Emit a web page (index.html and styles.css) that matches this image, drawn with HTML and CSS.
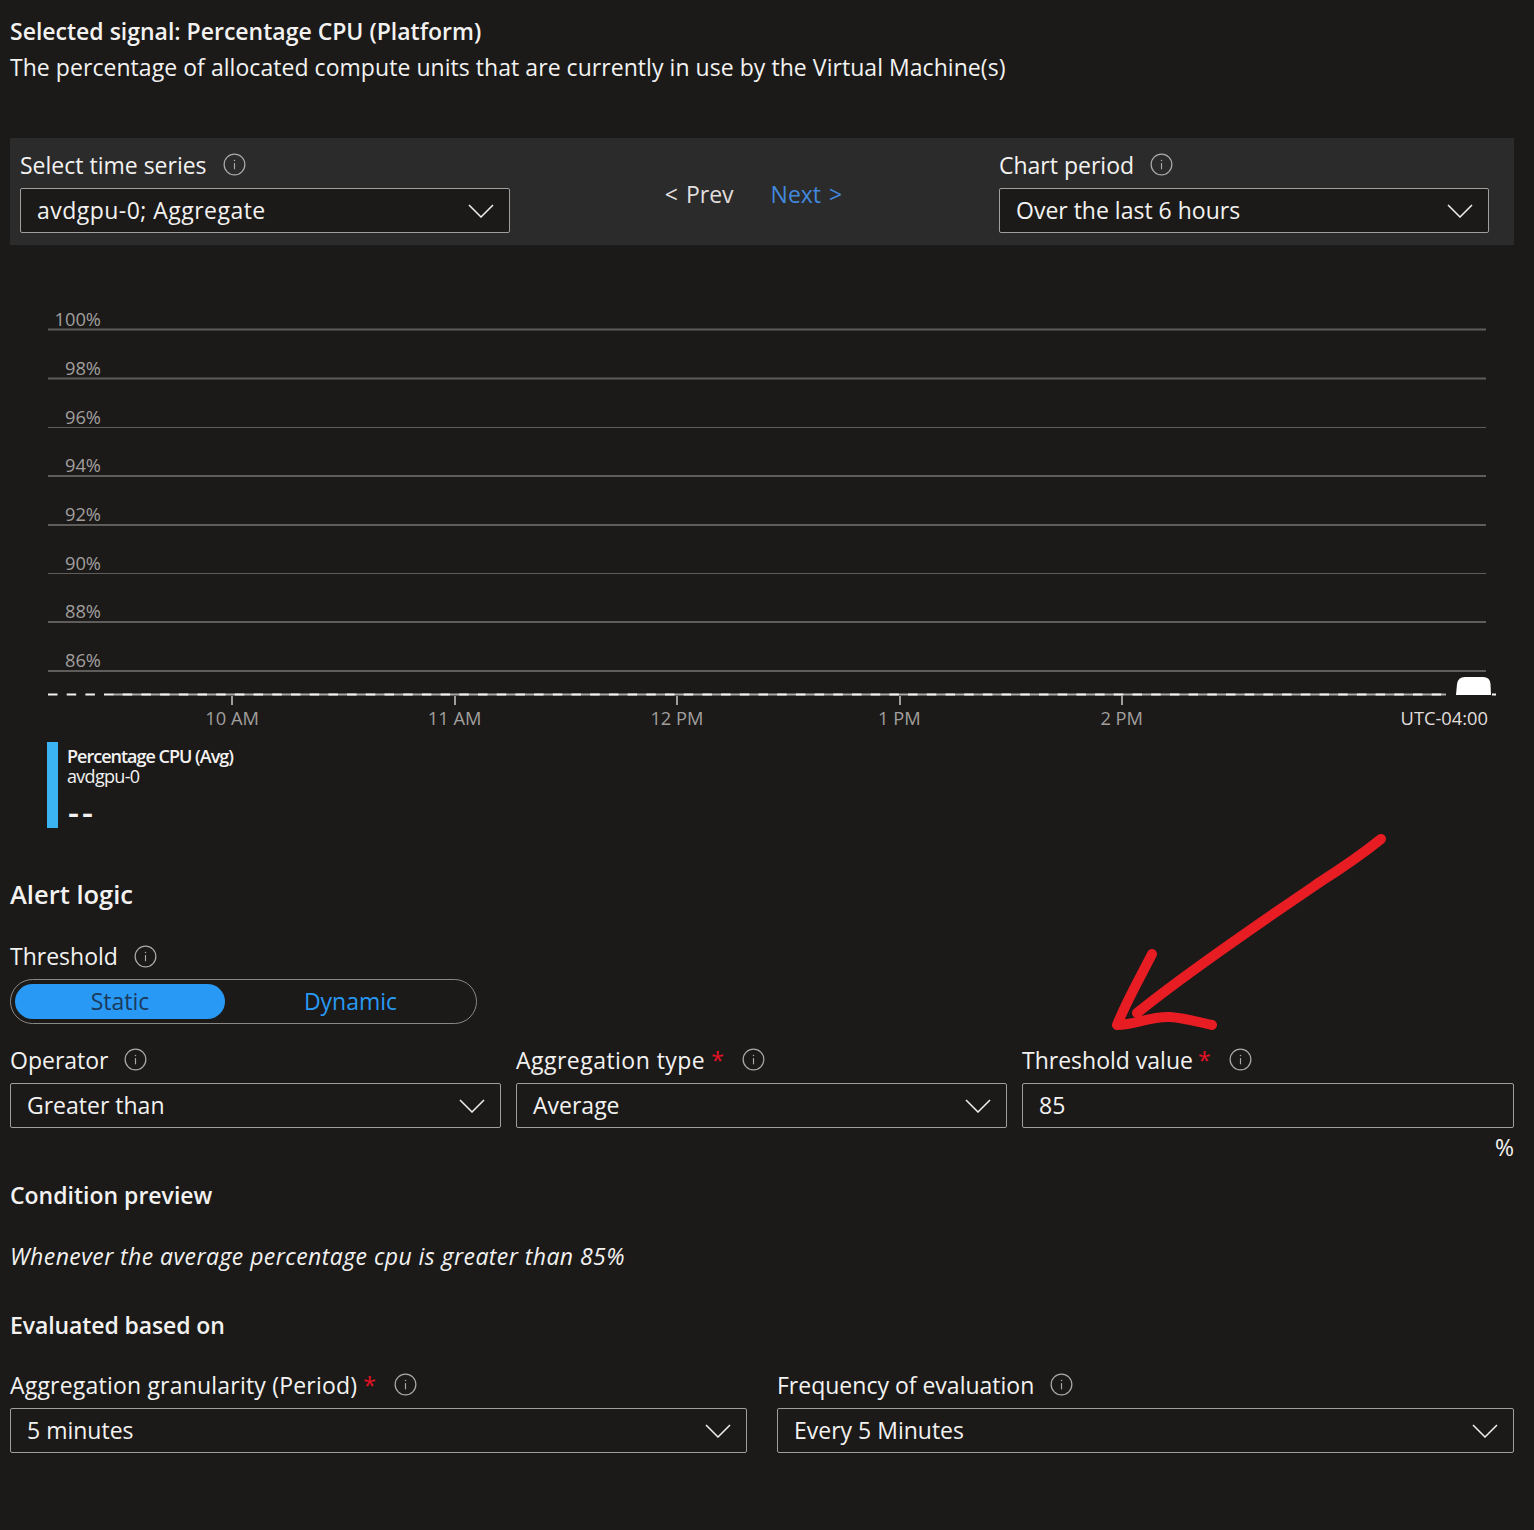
FILE: index.html
```html
<!DOCTYPE html>
<html>
<head>
	<title>Alert condition</title>
	<meta name="viewport" content="width=device-width, initial-scale=1.0">
	<link rel="stylesheet" href="styles.css">
</head>
<body>
	<div class="signal">
		<div class="signal-name">Selected signal: Percentage CPU (Platform)</div>
		<div class="signal-desc">The percentage of allocated compute units that are currently in use by the Virtual Machine(s)</div>
	</div>

	<div class="series-bar">
		<div class="field">
			<div class="field-label">Select time series <svg class="info"><use href="#info"/></svg></div>
			<div class="select"><span class="wide">avdgpu-0; Aggregate</span> <svg class="chevron"><use href="#chevron"/></svg></div>
		</div>
		<div class="pager">
			<span class="prev">&lt; Prev</span>
			<span class="next">Next &gt;</span>
		</div>
		<div class="field">
			<div class="field-label">Chart period <svg class="info"><use href="#info"/></svg></div>
			<div class="select">Over the last 6 hours <svg class="chevron"><use href="#chevron"/></svg></div>
		</div>
	</div>

	<svg class="chart" width="1534" height="464" viewBox="0 245 1534 464">
		<g class="grid">
			<path d="M48 329.5H1486"/>
			<path d="M48 378.5H1486"/>
			<path class="thin" d="M48 427.5H1486"/>
			<path d="M48 476H1486"/>
			<path d="M48 525H1486"/>
			<path class="thin" d="M48 573.5H1486"/>
			<path d="M48 622H1486"/>
			<path d="M48 671H1486"/>
		</g>
		<g class="y-labels">
			<text x="101" y="326">100%</text>
			<text x="101" y="375">98%</text>
			<text x="101" y="424">96%</text>
			<text x="101" y="472">94%</text>
			<text x="101" y="521">92%</text>
			<text x="101" y="570">90%</text>
			<text x="101" y="618">88%</text>
			<text x="101" y="667">86%</text>
		</g>
		<path class="series-under" d="M113 694.5H1446"/>
		<path class="series" d="M48 694.5H96"/>
		<path class="series" d="M104 694.5H1446"/>
		<path class="series" d="M1492 694.5H1496"/>
		<path class="blob" d="M1456 695L1457 684Q1458 677 1465 677H1483Q1490 677 1490.5 684L1491 695Z"/>
		<g class="ticks">
			<path d="M232 696V705"/>
			<path d="M455 696V705"/>
			<path d="M677 696V705"/>
			<path d="M900 696V705"/>
			<path d="M1122 696V705"/>
		</g>
	</svg>

	<div class="axis">
		<span class="tick-label first">10 AM</span>
		<span class="tick-label">11 AM</span>
		<span class="tick-label">12 PM</span>
		<span class="tick-label">1 PM</span>
		<span class="tick-label">2 PM</span>
		<span class="tz">UTC-04:00</span>
	</div>

	<div class="legend">
		<div class="legend-bar"></div>
		<div class="legend-text">
			<div class="legend-name">Percentage CPU (Avg)</div>
			<div class="legend-res">avdgpu-0</div>
			<div class="legend-val">--</div>
		</div>
	</div>

	<div class="logic">
		<h2 class="logic-title">Alert logic</h2>
		<div class="field-label threshold-label">Threshold <svg class="info"><use href="#info"/></svg></div>
		<div class="toggle">
			<span class="toggle-on">Static</span>
			<span class="toggle-off">Dynamic</span>
		</div>

		<div class="row-three">
			<div class="field">
				<div class="field-label">Operator <svg class="info"><use href="#info"/></svg></div>
				<div class="select">Greater than <svg class="chevron"><use href="#chevron"/></svg></div>
			</div>
			<div class="field">
				<div class="field-label"><span class="wide">Aggregation type</span> <span class="req">*</span> <svg class="info"><use href="#info"/></svg></div>
				<div class="select">Average <svg class="chevron"><use href="#chevron"/></svg></div>
			</div>
			<div class="field">
				<div class="field-label"><span class="label-text">Threshold value</span> <span class="req">*</span> <svg class="info"><use href="#info"/></svg></div>
				<div class="select">85</div>
				<div class="unit">%</div>
			</div>
		</div>

		<h3 class="sub preview-title">Condition preview</h3>
		<p class="preview">Whenever the average percentage cpu is greater than 85%</p>

		<h3 class="sub eval-title">Evaluated based on</h3>
		<div class="row-two">
			<div class="field">
				<div class="field-label"><span class="granularity">Aggregation granularity (Period)</span> <span class="req">*</span> <svg class="info"><use href="#info"/></svg></div>
				<div class="select">5 minutes <svg class="chevron"><use href="#chevron"/></svg></div>
			</div>
			<div class="field">
				<div class="field-label">Frequency of evaluation <svg class="info"><use href="#info"/></svg></div>
				<div class="select">Every 5 Minutes <svg class="chevron"><use href="#chevron"/></svg></div>
			</div>
		</div>
	</div>

	<!-- red marker arrow drawn over the screenshot -->
	<svg class="arrow" width="330" height="220" viewBox="0 0 330 220">
		<path d="M301 19C280 36 262 48 240 62C190 96 110 150 57 193"/>
		<path d="M72 134C60 158 47 180 37 205C55 205 70 196 90 197C105 198 118 202 132 205"/>
	</svg>

	<svg class="defs">
		<symbol id="info" viewBox="0 0 24 24">
			<circle cx="12" cy="12" r="10.8" fill="none" stroke="#a8a8a8" stroke-width="1.3"/>
			<path d="M12 10.5V17" stroke="#a8a8a8" stroke-width="1.2"/>
			<circle cx="12" cy="7.8" r="0.8" fill="#a8a8a8"/>
		</symbol>
		<symbol id="chevron" viewBox="0 0 26 14">
			<path d="M1 1L13 13L25 1" fill="none" stroke="#f0f0f0" stroke-width="1.5"/>
		</symbol>
	</svg>
</body>
</html>
```

FILE: styles.css
```css
body {
	margin: 0;
	width: 1534px;
	height: 1530px;
	position: relative;
	overflow: hidden;
	background-color: #1b1a19;
	color: #f3f2f1;
	font-family: "Open Sans", "Noto Sans", sans-serif;
	font-size: 23px;
}
.signal {
	padding: 13px 10px 0;
	height: 138px;
	box-sizing: border-box;
	line-height: 36px;
}
.signal-name {
	font-weight: 600;
}
.signal-desc {
	letter-spacing: 0.05px;
}
.series-bar {
	margin-left: 10px;
	width: 1504px;
	height: 107px;
	box-sizing: border-box;
	padding: 10px 25px 0 10px;
	background-color: #2b2b2b;
	display: grid;
	grid-template-columns: 490px 1fr 490px;
}
.field-label {
	display: flex;
	align-items: center;
	gap: 8px;
	height: 40px;
	box-sizing: border-box;
	padding-bottom: 7px;
	white-space: pre;
}
.info {
	width: 23px;
	height: 23px;
	margin-left: 2px;
}
.req {
	color: #e81123;
	margin-left: -6px;
	margin-right: 8px;
}
.wide {
	letter-spacing: 0.47px;
	margin-right: 4px;
}
.granularity {
	letter-spacing: 0.2px;
	margin-right: 4px;
}
.label-text {
	margin-right: 3px;
}
.select {
	height: 45px;
	box-sizing: border-box;
	border: 1px solid #a19f9d;
	border-radius: 2px;
	background-color: #1b1a19;
	padding: 0 15px 1px 16px;
	display: flex;
	align-items: center;
	justify-content: space-between;
}
.chevron {
	width: 26px;
	height: 14px;
	margin-top: 1px;
}
.pager {
	display: flex;
	justify-content: center;
	gap: 37px;
	padding-top: 30px;
	padding-right: 2px;
	word-spacing: 2px;
}
.prev {
	color: #e1dfdd;
}
.next {
	color: #4288dd;
}
.chart {
	display: block;
}
.grid path {
	stroke: #5e5d5c;
	stroke-width: 2;
}
.grid path.thin {
	stroke-width: 1;
}
.y-labels text {
	fill: #a19f9d;
	font-size: 18.3px;
	text-anchor: end;
}
.series {
	stroke: #f3f2f1;
	stroke-width: 2;
	stroke-dasharray: 9.5 9.2;
}
.series-under {
	stroke: #a8a7a6;
	stroke-width: 2;
}
.blob {
	fill: #fff;
}
.ticks path {
	stroke: #a19f9d;
	stroke-width: 2;
}
.axis {
	height: 30px;
	font-size: 18.3px;
	color: #a19f9d;
	display: grid;
	grid-template-columns: 121px repeat(5, 222.4px) 1fr;
	padding: 0 46px 0 0;
}
.tick-label {
	text-align: center;
	line-height: 18px;
}
.axis .first {
	grid-column: 2;
}
.tz {
	text-align: right;
	color: #e1dfdd;
	line-height: 18px;
}
.legend {
	display: flex;
	gap: 9px;
	margin-left: 47px;
	margin-top: 3px;
	height: 86px;
}
.legend-bar {
	width: 11px;
	background-color: #3bb3f3;
}
.legend-text {
	font-size: 18px;
	letter-spacing: -1px;
	line-height: 20px;
	padding-top: 4px;
}
.legend-name {
	font-weight: 600;
}
.legend-res {
	letter-spacing: -0.7px;
}
.legend-val {
	font-size: 34px;
	font-weight: 600;
	line-height: 26px;
	margin-top: 13px;
	margin-left: 1px;
	letter-spacing: 3px;
}
.logic {
	padding: 0 20px 0 10px;
}
.logic-title {
	margin: 48px 0 0;
	font-size: 25.5px;
	font-weight: 600;
	line-height: 36px;
}
.threshold-label {
	margin-top: 27px;
	padding-bottom: 6px;
}
.toggle {
	width: 467px;
	height: 45px;
	box-sizing: border-box;
	border: 1px solid #8a8886;
	border-radius: 23px;
	padding: 4px;
	display: flex;
	align-items: center;
}
.toggle-on {
	width: 210px;
	height: 35px;
	border-radius: 18px;
	background-color: #2899f5;
	color: #1b3a5c;
	text-align: center;
	line-height: 35px;
}
.toggle-off {
	width: 247px;
	box-sizing: border-box;
	padding-left: 4px;
	text-align: center;
	line-height: 35px;
	color: #2899f5;
}
.row-three {
	display: grid;
	grid-template-columns: 491px 491px 492px;
	gap: 15px;
	margin-top: 19px;
}
.unit {
	text-align: right;
	line-height: 38px;
}
.sub {
	margin: 0;
	font-size: 23px;
	font-weight: 600;
	line-height: 36px;
}
.preview-title {
	margin-top: 11px;
}
.preview {
	margin: 25px 0 0;
	font-style: italic;
	letter-spacing: 0.44px;
	line-height: 36px;
}
.eval-title {
	margin-top: 33px;
	letter-spacing: -0.1px;
}
.row-two {
	display: grid;
	grid-template-columns: 737px 737px;
	gap: 30px;
	margin-top: 25px;
}
.arrow {
	position: absolute;
	left: 1080px;
	top: 820px;
}
.arrow path {
	fill: none;
	stroke: #e81c23;
	stroke-width: 10;
	stroke-linecap: round;
	stroke-linejoin: round;
}
.defs {
	position: absolute;
	width: 0;
	height: 0;
}
```
